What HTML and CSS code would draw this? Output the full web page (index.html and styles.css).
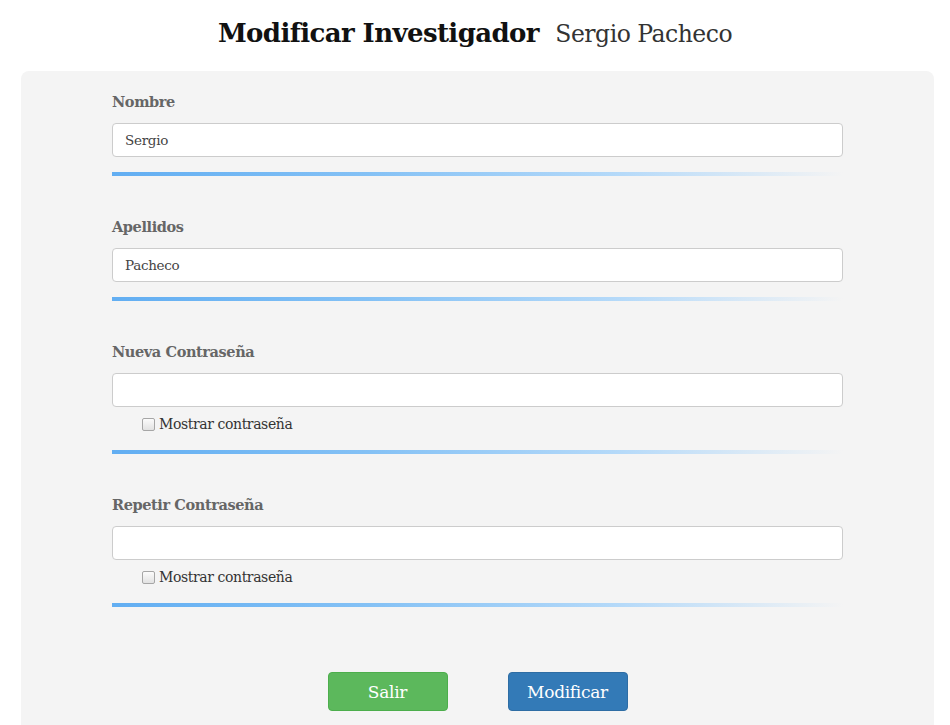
FILE: index.html
```html
<!DOCTYPE html>
<html lang="es">
<head>
<meta charset="utf-8">
<title>Modificar Investigador</title>
<link rel="stylesheet" href="styles.css">
</head>
<body>
<h1 class="title">Modificar Investigador <small class="subtitle">Sergio Pacheco</small></h1>
<div class="panel">
  <form class="form">
    <div class="group">
      <label class="label" for="nombre">Nombre</label>
      <input class="input" id="nombre" type="text" value="Sergio">
      <div class="sep"></div>
    </div>
    <div class="group">
      <label class="label" for="apellidos">Apellidos</label>
      <input class="input" id="apellidos" type="text" value="Pacheco">
      <div class="sep"></div>
    </div>
    <div class="group">
      <label class="label" for="pass1">Nueva Contraseña</label>
      <input class="input" id="pass1" type="password">
      <label class="check"><input type="checkbox" class="cb"> Mostrar contraseña</label>
      <div class="sep"></div>
    </div>
    <div class="group">
      <label class="label" for="pass2">Repetir Contraseña</label>
      <input class="input" id="pass2" type="password">
      <label class="check"><input type="checkbox" class="cb"> Mostrar contraseña</label>
      <div class="sep"></div>
    </div>
    <div class="actions">
      <button type="button" class="btn btn-green">Salir</button>
      <button type="button" class="btn btn-blue">Modificar</button>
    </div>
  </form>
</div>
</body>
</html>
```
FILE: styles.css
```css
html, body {
  margin: 0;
  padding: 0;
  background: #fff;
  font-family: "DejaVu Serif", "Liberation Serif", serif;
  color: #333;
}
.title {
  margin: 0;
  padding-top: 15px;
  height: 71px;
  box-sizing: border-box;
  text-align: center;
  font-size: 26px;
  font-weight: bold;
  color: #111;
  line-height: 36px;
  letter-spacing: -0.6px;
}
.subtitle {
  font-size: 23.5px;
  font-weight: normal;
  color: #333;
  margin-left: 8px;
  letter-spacing: -0.5px;
}
.panel {
  margin: 0 16px 0 21px;
  background: #f4f4f4;
  border-radius: 8px;
  padding: 20px 91px 30px;
  min-height: 654px;
  box-sizing: border-box;
}
.form {
  display: flex;
  flex-direction: column;
}
.group {
  display: flex;
  flex-direction: column;
  margin-bottom: 40px;
}
.label {
  font-size: 14.5px;
  font-weight: bold;
  color: #666;
  line-height: 22px;
  margin-bottom: 10px;
  letter-spacing: -0.4px;
}
.input {
  height: 34px;
  box-sizing: border-box;
  border: 1px solid #ccc;
  border-radius: 4px;
  background: #fff;
  padding: 0 12px;
  font-family: inherit;
  font-size: 13.5px;
  color: #444;
  letter-spacing: -0.3px;
}
.check {
  margin-top: 6px;
  margin-left: 30px;
  display: flex;
  align-items: center;
  line-height: 22px;
  font-size: 14px;
  color: #333;
  letter-spacing: -0.4px;
}
.cb {
  appearance: none;
  -webkit-appearance: none;
  margin: 0 4px 0 0;
  width: 13px;
  height: 13px;
  box-sizing: border-box;
  border: 1px solid #a6a6a6;
  border-radius: 2px;
  background: linear-gradient(#fbfbfb, #e2e2e2);
}
.sep {
  margin-top: 15px;
  height: 4px;
  background: linear-gradient(to right, #62aef2 0%, #84c1f5 35%, #b6daf9 70%, #f4f4f4 100%);
}
.actions {
  display: flex;
  justify-content: center;
  gap: 60px;
  margin-top: 25px;
}
.btn {
  width: 120px;
  height: 39px;
  border-radius: 4px;
  font-family: inherit;
  font-size: 17px;
  color: #fff;
  cursor: pointer;
  letter-spacing: -0.3px;
}
.btn-green {
  background: #5cb85c;
  border: 1px solid #4cae4c;
}
.btn-blue {
  background: #337ab7;
  border: 1px solid #2e6da4;
}
```
